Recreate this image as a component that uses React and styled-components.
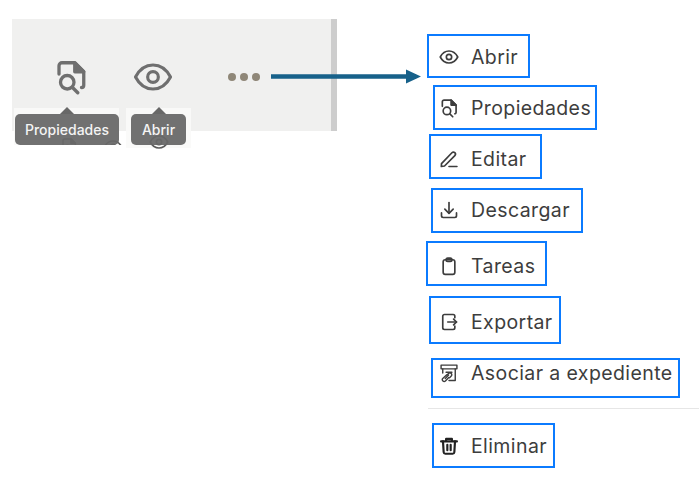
import React from "react"
import styled, { createGlobalStyle } from "styled-components"

const GlobalStyle = createGlobalStyle`
    html, body {
        margin: 0;
        padding: 0;
        background: #fff;
    }
    body {
        font-family: "Inter", "Liberation Sans", sans-serif;
    }
`

const Svg = ({ size = 20, width = 2, children, className }) => (
    <svg className={className} width={size} height={size} viewBox="0 0 24 24" fill="none"
        stroke="currentColor" strokeWidth={width} strokeLinecap="round" strokeLinejoin="round">
        {children}
    </svg>
)

const EyeIcon = (props) => (
    <Svg {...props}>
        <path d="M1.5 12C4 7.2 7.6 4.8 12 4.8s8 2.4 10.5 7.2c-2.5 4.8-6.1 7.2-10.5 7.2S4 16.8 1.5 12z" />
        <circle cx="12" cy="12" r="3.2" />
    </Svg>
)

const FileSearchIcon = (props) => (
    <Svg {...props}>
        <path d="M4 10V4.500A2 2 0 0 1 6 2.500h8.500L20.500 8.500V17.500a1.500 1.500 0 0 1-1.500 1.500" />
        <path d="M14.500 2.500L20.500 8.500H14.500z" fill="currentColor" />
        <circle cx="9.500" cy="15.500" r="4.500" />
        <path d="M13 19l3.500 3.500" />
    </Svg>
)

const PencilIcon = (props) => (
    <Svg {...props}>
        <path d="M3 17.500L15.500 4.500a2.400 2.400 0 0 1 3.500 3.400L6.600 20.400 2.800 21z" />
        <path d="M12 21h9.500" />
    </Svg>
)

const DownloadIcon = (props) => (
    <Svg {...props}>
        <path d="M12 3v12.500" />
        <path d="M7 11l5 5 5-5" />
        <path d="M3 15.500V19a2 2 0 0 0 2 2h14a2 2 0 0 0 2-2v-3.500" />
    </Svg>
)

const ClipboardIcon = (props) => (
    <Svg {...props}>
        <rect x="5" y="4.500" width="14" height="17.500" rx="2.500" />
        <path d="M8.500 4.500C8.500 3 9.500 2.500 10.500 2.500h3c1 0 2 .5 2 2S14.500 6.500 13.500 6.500h-3c-1 0-2-.5-2-2z" />
    </Svg>
)

const ExportIcon = (props) => (
    <Svg {...props}>
        <path d="M19 7V5a2 2 0 0 0-2-2H6.500a2 2 0 0 0-2 2v14a2 2 0 0 0 2 2H17a2 2 0 0 0 2-2v-2" />
        <path d="M10.500 12H21" />
        <path d="M17.500 8.500L21 12l-3.500 3.500" />
    </Svg>
)

const AttachIcon = (props) => (
    <Svg {...props} width={1.7}>
        <rect x="2.500" y="2.500" width="19" height="4.500" />
        <path d="M4.500 7v5" />
        <path d="M19.500 7v14H12" />
        <path d="M8.500 11h7" />
        <path d="M9.500 14.500l2-2a2.200 2.200 0 0 1 3.200 3.200l-2 2" />
        <path d="M9 14.500l-4.500 4a2.200 2.200 0 0 0 3.200 3l4-4" />
        <path d="M7.500 18.500l4-4" />
    </Svg>
)

const TrashIcon = (props) => (
    <Svg {...props} width={2.6}>
        <path d="M2.500 6.500h19" />
        <path d="M8.500 6V3.500h7V6" />
        <path d="M4.800 6.500l.8 13a2 2 0 0 0 2 1.800h8.800a2 2 0 0 0 2-1.800l.8-13" />
        <path d="M10 10.500v6.500M14 10.500v6.500" />
    </Svg>
)

const menuItems = [
    { label: "Abrir", Icon: EyeIcon, frame: { x: -1, w: 103, top: 3, h: 44 } },
    { label: "Propiedades", Icon: FileSearchIcon, frame: { x: 5, w: 164, top: 3, h: 45 } },
    { label: "Editar", Icon: PencilIcon, frame: { x: 1, w: 113, top: 1, h: 45 } },
    { label: "Descargar", Icon: DownloadIcon, frame: { x: 3, w: 152, top: 4, h: 45 } },
    { label: "Tareas", Icon: ClipboardIcon, extra: 5, frame: { x: -2, w: 121, top: 1, h: 45 } },
    { label: "Exportar", Icon: ExportIcon, extra: 5, frame: { x: 1, w: 132, top: 0, h: 48 } },
    { label: "Asociar a expediente", Icon: AttachIcon, frame: { x: 3, w: 249, top: 11, h: 40 } },
]

const deleteItem = { label: "Eliminar", Icon: TrashIcon, strong: true, frame: { x: 4, w: 123, top: 3, h: 45 } }

function MenuRow({ item }) {
    const { label, Icon, extra, strong, frame } = item
    return (
        <Row $extra={extra}>
            <IconSlot $strong={strong}><Icon /></IconSlot>
            <Label>{label}</Label>
            <Frame $x={frame.x} $w={frame.w} $top={frame.top} $h={frame.h} />
        </Row>
    )
}

function App() {
    return (
        <Page>
            <GlobalStyle />
            <Panel>
                <ToolIcon><FileSearchIcon size={36} width={2.2} /></ToolIcon>
                <ToolIcon $margin="44px"><EyeIcon size={40} width={1.9} /></ToolIcon>
                <Dots>
                    <Dot /><Dot /><Dot />
                </Dots>
                <TipPatch $x={2} $w={105} $h={37} />
                <TipPatch $x={114} $w={65} $h={40} />
                <Ghost $x={48} $top={118} $h={8}><FileSearchIcon size={18} /></Ghost>
                <Ghost $x={91} $top={118} $h={8}><EyeIcon size={20} /></Ghost>
                <Ghost $x={137} $top={113} $h={17}><EyeIcon size={20} /></Ghost>
                <Tooltip $x={3} $w={104}>Propiedades</Tooltip>
                <Tooltip $x={119} $w={55}>Abrir</Tooltip>
            </Panel>
            <Menu>
                {menuItems.map((item) => <MenuRow key={item.label} item={item} />)}
                <Divider />
                <MenuRow item={deleteItem} />
            </Menu>
            <Arrow width="152" height="18" viewBox="0 0 152 18">
                <path d="M0 6.200H135V1.500L150 8.500L135 15.500V10.800H0z" fill="#17618a" />
            </Arrow>
        </Page>
    )
}

const Page = styled.div`
    position: relative;
    width: 699px;
    height: 481px;
    overflow: hidden;
    display: flex;
    align-items: flex-start;
    padding: 19px 0 0 12px;
    box-sizing: border-box;
    background: #fff;
`

const Panel = styled.div`
    position: relative;
    flex: none;
    width: 325px;
    height: 112px;
    box-sizing: border-box;
    padding: 39px 0 0 41px;
    display: flex;
    align-items: flex-start;
    background: #f0f0ef;
    border-right: 6px solid #cdcdcd;
`

const ToolIcon = styled.div`
    display: flex;
    height: 38px;
    align-items: center;
    margin-left: ${(p) => p.$margin || 0};
    color: #6f6f6f;
`

const Dots = styled.div`
    display: flex;
    gap: 4px;
    height: 38px;
    align-items: center;
    margin-left: 55px;
`

const Dot = styled.span`
    width: 8px;
    height: 8px;
    border-radius: 50%;
    background: #8f8778;
`

const Ghost = styled.div`
    position: absolute;
    left: ${(p) => p.$x}px;
    top: ${(p) => p.$top}px;
    height: ${(p) => p.$h}px;
    overflow: hidden;
    color: #5a5a5a;
`

const TipPatch = styled.div`
    position: absolute;
    left: ${(p) => p.$x}px;
    top: 89px;
    width: ${(p) => p.$w}px;
    height: ${(p) => p.$h}px;
    background: rgba(250, 250, 248, 0.9);
`

const Tooltip = styled.div`
    position: absolute;
    left: ${(p) => p.$x}px;
    top: 95px;
    width: ${(p) => p.$w}px;
    height: 31px;
    display: flex;
    align-items: center;
    justify-content: center;
    border-radius: 5px;
    background: rgba(104, 104, 104, 0.94);
    color: #f4f4f4;
    font-size: 14px;
    font-weight: 500;

    &::before {
        content: "";
        position: absolute;
        left: 50%;
        top: -7px;
        margin-left: -7px;
        border-left: 7px solid transparent;
        border-right: 7px solid transparent;
        border-bottom: 7px solid #686868;
    }
`

const Menu = styled.div`
    flex: none;
    width: 271px;
    margin: 12px 0 0 91px;
    display: flex;
    flex-direction: column;
`

const Row = styled.div`
    position: relative;
    flex: none;
    height: 51px;
    margin-top: ${(p) => p.$extra || 0}px;
    padding-left: 11px;
    display: flex;
    align-items: center;
    color: #3d3d3d;
`

const IconSlot = styled.span`
    flex: none;
    width: 20px;
    height: 20px;
    display: flex;
    color: ${(p) => (p.$strong ? "#222" : "inherit")};
`

const Label = styled.span`
    margin-left: 12px;
    font-size: 19.5px;
    letter-spacing: 0.4px;
    white-space: nowrap;
`

const Frame = styled.span`
    position: absolute;
    left: ${(p) => p.$x}px;
    top: ${(p) => p.$top}px;
    width: ${(p) => p.$w}px;
    height: ${(p) => p.$h}px;
    box-sizing: border-box;
    border: 2px solid #0b7bff;
`

const Divider = styled.div`
    flex: none;
    height: 1px;
    margin: 10px 0 11px;
    background: #e6e6e6;
`

const Arrow = styled.svg`
    position: absolute;
    left: 271px;
    top: 68px;
`

export default App
